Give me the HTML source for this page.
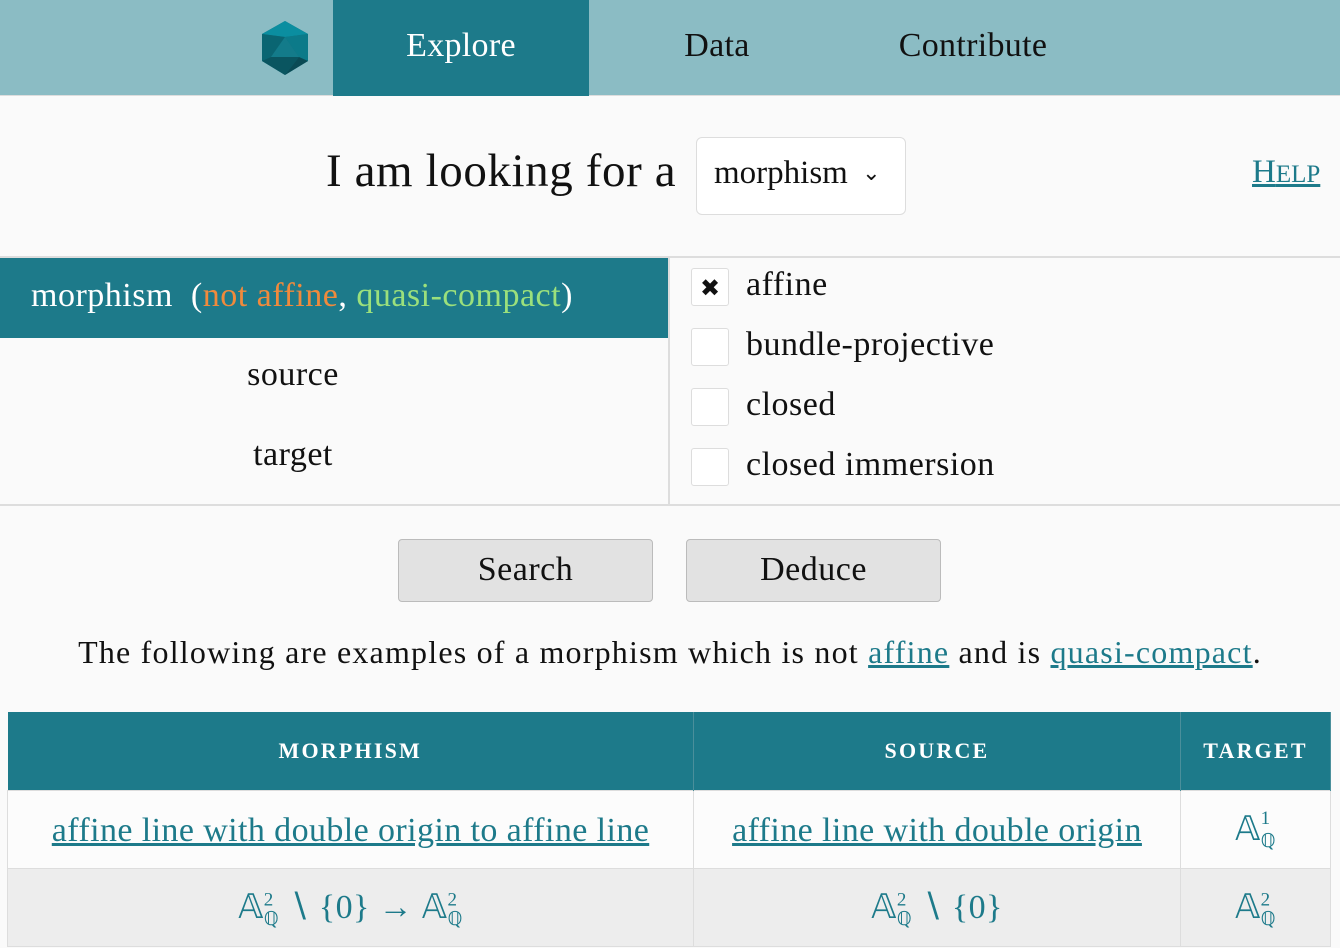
<!DOCTYPE html>
<html><head><meta charset="utf-8"><style>
*{margin:0;padding:0;box-sizing:border-box}
body{width:1340px;height:948px;background:#fafafa;font-family:"Liberation Serif",serif;color:#111;position:relative;overflow:hidden}
.a{position:absolute;white-space:nowrap}
.nav{position:absolute;left:0;top:0;width:1340px;height:96px;background:#8bbcc4;border-bottom:1px solid #ddd}
.tab{position:absolute;top:0;height:96px;line-height:92px;font-size:34px;text-align:center;letter-spacing:0.3px}
.cb{position:absolute;left:691px;width:38px;height:38px;background:#fff;border:1px solid #ddd;border-radius:3px}
.lbl{position:absolute;left:746px;font-size:34px;letter-spacing:0.5px}
.btn{position:absolute;top:539px;width:255px;height:63px;background:#e2e2e2;border:1.5px solid #bbb;border-radius:4px;font-size:34px;text-align:center;line-height:60px;letter-spacing:0.5px}
a,.lnk{color:#1d7a8a;text-decoration:underline}
table{position:absolute;left:7px;top:712px;width:1324px;border-collapse:collapse}
th{background:#1d7a8a;color:#fff;height:78px;font-size:22px;letter-spacing:2.2px;border-right:1px solid #4a8f9b}
td{height:78px;text-align:center;font-size:34px;color:#1d7a8a;border:1px solid #ddd;letter-spacing:0.4px;padding-top:4px}
sup,sub{font-size:19px}
</style></head><body>
<div class="nav">
<svg class="a" style="left:261px;top:21px" width="48" height="54" viewBox="0 0 48 54">
<polygon points="24,0 47,13 47,40 24,54 1,40 1,13" fill="#0e6f7e"/>
<polygon points="24,0 47,13 24,16 1,13" fill="#0b8ea0"/>
<polygon points="1,13 24,16 10,36 1,40" fill="#0a6572"/>
<polygon points="47,13 24,16 38,36 47,40" fill="#0c7a89"/>
<polygon points="24,16 38,36 10,36" fill="#137b8a"/>
<polygon points="10,36 38,36 24,54 1,40" fill="#0a5560"/>
<polygon points="38,36 47,40 24,54" fill="#0a4a54"/>
</svg>
<div class="tab" style="left:333px;width:256px;background:#1d7a8a;color:#fff">Explore</div>
<div class="tab" style="left:589px;width:256px">Data</div>
<div class="tab" style="left:845px;width:256px">Contribute</div>
</div>
<div class="a" style="left:326px;top:144px;font-size:47px;letter-spacing:0.6px">I am looking for a</div>
<div class="a" style="left:696px;top:137px;width:210px;height:78px;background:#fff;border:1px solid #ddd;border-radius:6px;font-size:33px;padding:17px 0 0 17px">morphism <span style="font-size:22px;position:relative;top:-3px;left:6px">&#8964;</span></div>
<div class="a lnk" style="left:1252px;top:154px;font-size:33px">H<span style="font-size:25px">ELP</span></div>
<div class="a" style="left:0;top:256px;width:1340px;border-top:2px solid #ddd"></div>
<div class="a" style="left:0;top:258px;width:668px;height:80px;background:#1d7a8a;color:#fff;font-size:34px;padding:19px 0 0 31px;letter-spacing:0.5px">morphism &nbsp;(<span style="color:#f08a3c">not affine</span>, <span style="color:#9be07c">quasi-compact</span>)</div>
<div class="a" style="left:0;top:356px;width:586px;text-align:center;font-size:34px;letter-spacing:0.5px">source</div>
<div class="a" style="left:0;top:436px;width:586px;text-align:center;font-size:34px;letter-spacing:0.5px">target</div>
<div class="a" style="left:668px;top:258px;height:248px;border-left:2px solid #ddd"></div>
<div class="a" style="left:0;top:504px;width:1340px;border-top:2px solid #ddd"></div>
<div class="cb" style="top:268px;font:bold 24px 'DejaVu Sans',sans-serif;text-align:center;line-height:38px">&#10006;</div>
<div class="cb" style="top:328px"></div><div class="cb" style="top:388px"></div><div class="cb" style="top:448px"></div>
<div class="lbl" style="top:266px">affine</div>
<div class="lbl" style="top:326px">bundle-projective</div>
<div class="lbl" style="top:386px">closed</div>
<div class="lbl" style="top:446px">closed immersion</div>
<div class="btn" style="left:398px">Search</div>
<div class="btn" style="left:686px">Deduce</div>
<div class="a" style="left:0;top:634px;width:1340px;text-align:center;font-size:32px;letter-spacing:1.2px">The following are examples of a morphism which is not <a>affine</a> and is <a>quasi-compact</a>.</div>
<table>
<tr><th style="width:686px">MORPHISM</th><th style="width:487px">SOURCE</th><th>TARGET</th></tr>
<tr style="background:#fcfcfc"><td><a>affine line with double origin to affine line</a></td><td><a>affine line with double origin</a></td><td>𝔸<sup style="position:relative;top:-3px">1</sup><sub style="margin-left:-10px">ℚ</sub></td></tr>
<tr style="background:#ededed"><td>𝔸<sup>2</sup><sub style="margin-left:-10px">ℚ</sub> ∖ {0} → 𝔸<sup>2</sup><sub style="margin-left:-10px">ℚ</sub></td><td>𝔸<sup>2</sup><sub style="margin-left:-10px">ℚ</sub> ∖ {0}</td><td>𝔸<sup>2</sup><sub style="margin-left:-10px">ℚ</sub></td></tr>
</table>
</body></html>
